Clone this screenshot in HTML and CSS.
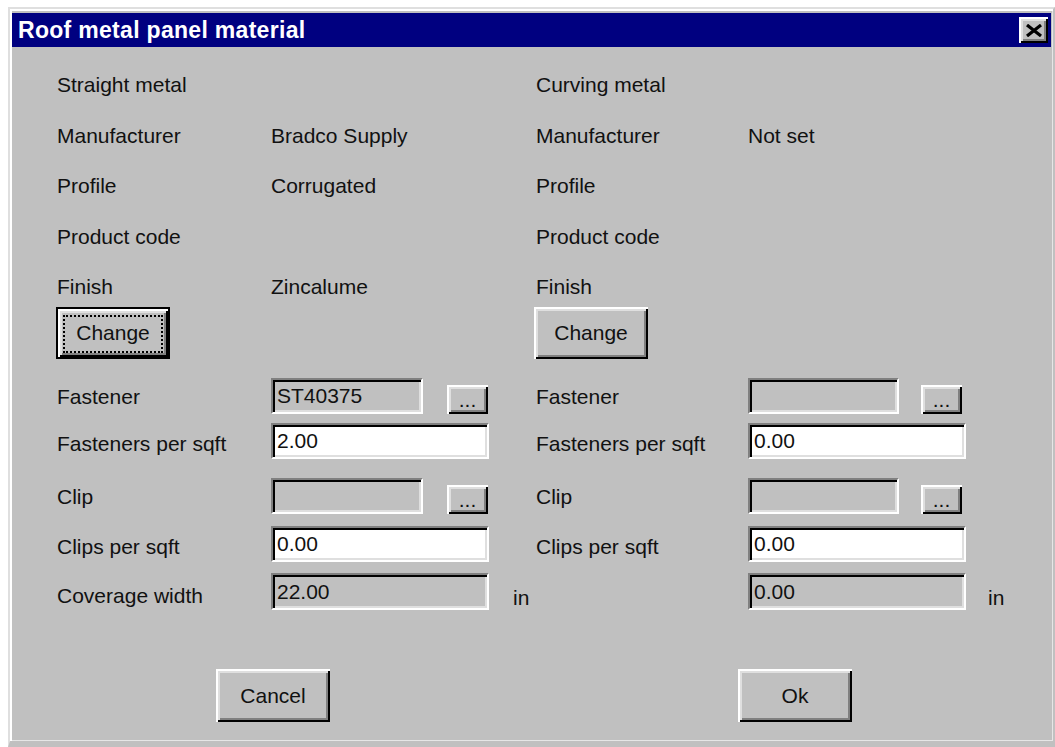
FILE: index.html
```html
<!DOCTYPE html>
<html lang="en">
<head>
<meta charset="utf-8">
<title>Roof metal panel material</title>
<link rel="stylesheet" href="styles.css">
</head>
<body>
<div class="window">
  <div class="titlebar">
    <span class="title">Roof metal panel material</span>
    <button class="close" type="button" aria-label="Close">
      <svg width="16" height="13" viewBox="0 0 16 13"><path d="M1 1 L15 12 M15 1 L1 12" stroke="#000" stroke-width="3.2" fill="none"/></svg>
    </button>
  </div>

  <div class="form">
    <!-- header row -->
    <div class="txt">Straight metal</div><div></div><div></div>
    <div class="txt">Curving metal</div><div></div><div></div>

    <div class="txt">Manufacturer</div><div class="txt">Bradco Supply</div><div></div>
    <div class="txt">Manufacturer</div><div class="txt">Not set</div><div></div>

    <div class="txt">Profile</div><div class="txt">Corrugated</div><div></div>
    <div class="txt">Profile</div><div></div><div></div>

    <div class="txt">Product code</div><div></div><div></div>
    <div class="txt">Product code</div><div></div><div></div>

    <div class="txt">Finish</div><div class="txt">Zincalume</div><div></div>
    <div class="txt">Finish</div><div></div><div></div>

    <div><button class="btn default left-btn" type="button">Change</button></div><div></div><div></div>
    <div><button class="btn right-btn" type="button">Change</button></div><div></div><div></div>

    <!-- fields -->
    <div class="flbl">Fastener</div>
    <div class="field"><div class="box short">ST40375</div><button class="btn dots" type="button">...</button></div>
    <div></div>
    <div class="flbl">Fastener</div>
    <div class="field narrow"><div class="box short">&nbsp;</div><button class="btn dots" type="button">...</button></div>
    <div></div>

    <div class="flbl low">Fasteners per sqft</div>
    <div class="box edit">2.00</div>
    <div></div>
    <div class="flbl low">Fasteners per sqft</div>
    <div class="box edit">0.00</div>
    <div></div>

    <div class="flbl">Clip</div>
    <div class="field"><div class="box short">&nbsp;</div><button class="btn dots" type="button">...</button></div>
    <div></div>
    <div class="flbl">Clip</div>
    <div class="field narrow"><div class="box short">&nbsp;</div><button class="btn dots" type="button">...</button></div>
    <div></div>

    <div class="flbl low">Clips per sqft</div>
    <div class="box edit">0.00</div>
    <div></div>
    <div class="flbl low">Clips per sqft</div>
    <div class="box edit">0.00</div>
    <div></div>

    <div class="flbl lower">Coverage width</div>
    <div class="box tall">22.00</div>
    <div class="unit left-unit">in</div>
    <div></div>
    <div class="box tall">0.00</div>
    <div class="unit right-unit">in</div>
  </div>

  <div class="actions">
    <button class="btn wide" type="button">Cancel</button>
    <button class="btn wide" type="button">Ok</button>
  </div>
</div>
</body>
</html>
```

FILE: styles.css
```css
* {
  box-sizing: border-box;
}

html,
body {
  margin: 0;
  background: #fff;
}

body {
  font-family: "Liberation Sans", Arial, sans-serif;
  font-size: 21px;
  color: #111;
}

/* Dialog frame; right and bottom edges run past the visible area */
.window {
  margin: 7px 0 0 8px;
  width: 1047px;
  height: 740px;
  background: #c0c0c0;
  border: 2px solid;
  border-color: #dfdfdf #c0c0c0 #c0c0c0 #dfdfdf;
  border-bottom-width: 6px;
  box-shadow: inset 2px 2px #fff, inset -1px -1px #e6e6e6;
  padding: 2px 2px 0 2px;
  display: flex;
  flex-direction: column;
}

.titlebar {
  height: 34px;
  margin-top: 2px;
  background: #000080;
  display: flex;
  align-items: center;
  justify-content: space-between;
  padding: 0 3px 0 6px;
}

.title {
  color: #fff;
  font-weight: bold;
  font-size: 23px;
  letter-spacing: 0.3px;
}

.close {
  width: 29px;
  height: 26px;
  padding: 0;
  border: 0;
  background: #c0c0c0;
  display: flex;
  align-items: center;
  justify-content: center;
  box-shadow: inset 2px 2px #fff, inset -2px -2px #000, inset 4px 4px #dfdfdf, inset -4px -4px #808080;
}

.close svg {
  display: block;
  margin-top: 1px;
}

/* Two material columns: label, value, unit */
.form {
  display: grid;
  grid-template-columns: 214px 219px 46px 212px 218px 1fr;
  grid-template-rows: 51px 50px 51px 50px 32px 71px 45px 55px 48px 47px 37px;
  align-items: start;
  margin: 26px 0 0 45px;
}

.txt {
  line-height: 24px;
  white-space: nowrap;
}

.flbl {
  line-height: 36px;
  padding-top: 1px;
  white-space: nowrap;
}

.flbl.low {
  padding-top: 3px;
}

.flbl.lower {
  padding-top: 5px;
}

.unit {
  line-height: 37px;
  padding-top: 6px;
}

.left-unit {
  padding-left: 23px;
}

.right-unit {
  padding-left: 22px;
}

/* Buttons */
.btn {
  position: relative;
  background: #c0c0c0;
  border: 0;
  padding: 0;
  font: inherit;
  color: #111;
  box-shadow: inset 2px 2px #fff, inset -2px -2px #000, inset 4px 4px #dfdfdf, inset -4px -4px #808080;
}

.left-btn,
.right-btn {
  width: 114px;
  height: 52px;
}

.left-btn {
  margin-left: -1px;
}

.right-btn {
  margin-left: -2px;
}

.btn.default {
  box-shadow: inset 0 0 0 2px #000, inset 4px 4px #fff, inset -4px -4px #000, inset 6px 6px #dfdfdf, inset -6px -6px #808080;
}

.btn.default::after {
  content: "";
  position: absolute;
  left: 7px;
  right: 7px;
  top: 8px;
  bottom: 6px;
  border: 2px dotted #000;
}

.dots {
  width: 41px;
  height: 29px;
  margin-top: 7px;
  line-height: 29px;
}

.wide {
  width: 114px;
  height: 53px;
}

/* Sunken edit fields */
.field {
  display: flex;
  gap: 24px;
  align-items: flex-start;
}

.field.narrow {
  gap: 22px;
}

.field.narrow .box.short {
  width: 151px;
}

.box {
  height: 36px;
  width: 218px;
  border: 2px solid;
  border-color: #808080 #fff #fff #808080;
  box-shadow: inset 2px 2px #000, inset -2px -2px #dfdfdf;
  background: #c0c0c0;
  padding: 0 4px;
  line-height: 32px;
  white-space: nowrap;
}

.box.short {
  width: 152px;
}

.box.edit {
  background: #fff;
}

.box.tall {
  height: 37px;
  line-height: 33px;
}

.actions {
  display: flex;
  gap: 408px;
  margin: 59px 0 0 204px;
}
```
